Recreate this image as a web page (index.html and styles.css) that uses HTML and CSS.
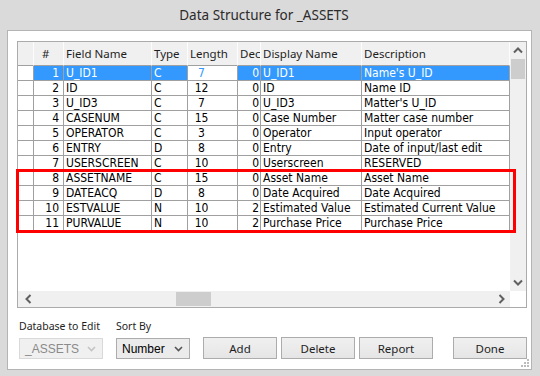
FILE: index.html
```html
<!DOCTYPE html>
<html lang="en">

<head>
    <meta charset="UTF-8">
    <title>Data Structure for _ASSETS</title>
    <link rel="stylesheet" href="styles.css">
</head>

<body>
    <div class="window">
        <div class="titlebar">Data Structure for _ASSETS</div>

        <div class="client">
            <div class="grid">
                <div class="grid-body">
                    <div class="row head">
                        <div class="cell"></div>
                        <div class="cell num">#</div>
                        <div class="cell">Field Name</div>
                        <div class="cell">Type</div>
                        <div class="cell">Length</div>
                        <div class="cell">Dec</div>
                        <div class="cell">Display Name</div>
                        <div class="cell">Description</div>
                    </div>
                    <div class="row selected">
                        <div class="cell ind"></div>
                        <div class="cell num">1</div>
                        <div class="cell">U_ID1</div>
                        <div class="cell">C</div>
                        <div class="cell len editing">7</div>
                        <div class="cell dec">0</div>
                        <div class="cell">U_ID1</div>
                        <div class="cell">Name's U_ID</div>
                    </div>
                    <div class="row">
                        <div class="cell ind"></div>
                        <div class="cell num">2</div>
                        <div class="cell">ID</div>
                        <div class="cell">C</div>
                        <div class="cell len">12</div>
                        <div class="cell dec">0</div>
                        <div class="cell">ID</div>
                        <div class="cell">Name ID</div>
                    </div>
                    <div class="row">
                        <div class="cell ind"></div>
                        <div class="cell num">3</div>
                        <div class="cell">U_ID3</div>
                        <div class="cell">C</div>
                        <div class="cell len">7</div>
                        <div class="cell dec">0</div>
                        <div class="cell">U_ID3</div>
                        <div class="cell">Matter's U_ID</div>
                    </div>
                    <div class="row">
                        <div class="cell ind"></div>
                        <div class="cell num">4</div>
                        <div class="cell">CASENUM</div>
                        <div class="cell">C</div>
                        <div class="cell len">15</div>
                        <div class="cell dec">0</div>
                        <div class="cell">Case Number</div>
                        <div class="cell">Matter case number</div>
                    </div>
                    <div class="row">
                        <div class="cell ind"></div>
                        <div class="cell num">5</div>
                        <div class="cell">OPERATOR</div>
                        <div class="cell">C</div>
                        <div class="cell len">3</div>
                        <div class="cell dec">0</div>
                        <div class="cell">Operator</div>
                        <div class="cell">Input operator</div>
                    </div>
                    <div class="row">
                        <div class="cell ind"></div>
                        <div class="cell num">6</div>
                        <div class="cell">ENTRY</div>
                        <div class="cell">D</div>
                        <div class="cell len">8</div>
                        <div class="cell dec">0</div>
                        <div class="cell">Entry</div>
                        <div class="cell">Date of input/last edit</div>
                    </div>
                    <div class="row">
                        <div class="cell ind"></div>
                        <div class="cell num">7</div>
                        <div class="cell">USERSCREEN</div>
                        <div class="cell">C</div>
                        <div class="cell len">10</div>
                        <div class="cell dec">0</div>
                        <div class="cell">Userscreen</div>
                        <div class="cell">RESERVED</div>
                    </div>
                    <div class="row">
                        <div class="cell ind"></div>
                        <div class="cell num">8</div>
                        <div class="cell">ASSETNAME</div>
                        <div class="cell">C</div>
                        <div class="cell len">15</div>
                        <div class="cell dec">0</div>
                        <div class="cell">Asset Name</div>
                        <div class="cell">Asset Name</div>
                    </div>
                    <div class="row">
                        <div class="cell ind"></div>
                        <div class="cell num">9</div>
                        <div class="cell">DATEACQ</div>
                        <div class="cell">D</div>
                        <div class="cell len">8</div>
                        <div class="cell dec">0</div>
                        <div class="cell">Date Acquired</div>
                        <div class="cell">Date Acquired</div>
                    </div>
                    <div class="row">
                        <div class="cell ind"></div>
                        <div class="cell num">10</div>
                        <div class="cell">ESTVALUE</div>
                        <div class="cell">N</div>
                        <div class="cell len">10</div>
                        <div class="cell dec">2</div>
                        <div class="cell">Estimated Value</div>
                        <div class="cell">Estimated Current Value</div>
                    </div>
                    <div class="row">
                        <div class="cell ind"></div>
                        <div class="cell num">11</div>
                        <div class="cell">PURVALUE</div>
                        <div class="cell">N</div>
                        <div class="cell len">10</div>
                        <div class="cell dec">2</div>
                        <div class="cell">Purchase Price</div>
                        <div class="cell">Purchase Price</div>
                    </div>
                </div>

                <!-- vertical scrollbar -->
                <div class="vscroll">
                    <svg class="arrow" width="16" height="17" viewBox="0 0 16 17">
                        <path d="M4 10.5 L8 6.5 L12 10.5" fill="none" stroke="#606060" stroke-width="2"/>
                    </svg>
                    <div class="vthumb"></div>
                    <div class="spacer"></div>
                    <svg class="arrow" width="16" height="17" viewBox="0 0 16 17">
                        <path d="M4 6.5 L8 10.5 L12 6.5" fill="none" stroke="#606060" stroke-width="2"/>
                    </svg>
                </div>

                <!-- horizontal scrollbar -->
                <div class="hscroll">
                    <svg class="arrow" width="17" height="16" viewBox="0 0 17 16">
                        <path d="M10.5 4 L6.5 8 L10.5 12" fill="none" stroke="#606060" stroke-width="2"/>
                    </svg>
                    <div class="htrack">
                        <div class="hthumb"></div>
                    </div>
                    <svg class="arrow" width="17" height="16" viewBox="0 0 17 16">
                        <path d="M6.5 4 L10.5 8 L6.5 12" fill="none" stroke="#606060" stroke-width="2"/>
                    </svg>
                </div>
                <div class="corner"></div>

                <div class="highlight"></div>
            </div>

            <div class="bottom">
                <div class="field">
                    <label>Database to Edit</label>
                    <div class="combo disabled">
                        <span>_ASSETS</span>
                        <svg width="9" height="6" viewBox="0 0 9 6">
                            <path d="M1 1 L4.5 4.5 L8 1" fill="none" stroke="#c4c4c4" stroke-width="1.6"/>
                        </svg>
                    </div>
                </div>
                <div class="field sort">
                    <label>Sort By</label>
                    <div class="combo">
                        <span>Number</span>
                        <svg width="9" height="6" viewBox="0 0 9 6">
                            <path d="M1 1 L4.5 4.5 L8 1" fill="none" stroke="#555" stroke-width="1.6"/>
                        </svg>
                    </div>
                </div>
                <div class="buttons">
                    <button class="btn">Add</button>
                    <button class="btn">Delete</button>
                    <button class="btn">Report</button>
                    <button class="btn done">Done</button>
                </div>
            </div>

            <svg class="grip" width="8" height="8" viewBox="0 0 8 8">
                <rect x="6" y="0" width="2" height="2" fill="#bcbcbc"/>
                <rect x="3" y="3" width="2" height="2" fill="#bcbcbc"/>
                <rect x="6" y="3" width="2" height="2" fill="#bcbcbc"/>
                <rect x="0" y="6" width="2" height="2" fill="#bcbcbc"/>
                <rect x="3" y="6" width="2" height="2" fill="#bcbcbc"/>
                <rect x="6" y="6" width="2" height="2" fill="#bcbcbc"/>
            </svg>
        </div>
    </div>
</body>

</html>
```

FILE: styles.css
```css
* {
    box-sizing: border-box;
    padding: 0;
    margin: 0;
}

body {
    width: 540px;
    height: 376px;
    overflow: hidden;
    font-family: 'DejaVu Sans Condensed', 'DejaVu Sans', sans-serif;
    font-size: 12px;
    color: #000;
}

/* Window frame */
.window {
    width: 540px;
    height: 376px;
    background: #dadada;
    display: flex;
    flex-direction: column;
}

.titlebar {
    height: 30px;
    line-height: 30px;
    text-align: center;
    padding-right: 12px;
    font-family: 'Noto Sans', sans-serif;
    font-size: 13.5px;
    color: #2b2b2b;
}

.client {
    position: relative;
    flex: 1;
    margin: 0 8px 6px 7px;
    border: 1px solid #b4b4b4;
    background: #fff;
    padding: 10px 4px 0 9px;
}

/* Data grid */
.grid {
    position: relative;
    height: 267px;
    border: 1px solid #ababab;
    display: grid;
    grid-template-columns: 492px 16px;
    grid-template-rows: 249px 16px;
}

.grid-body {
    overflow: hidden;
    background: #fff;
}

.row {
    display: grid;
    grid-template-columns: 16px 30px 88px 36px 50px 23px 101px 148px;
    height: 15px;
}

.cell {
    border-right: 1px solid #a0a0a0;
    border-bottom: 1px solid #a0a0a0;
    padding: 0 2px;
    line-height: 14px;
    white-space: nowrap;
    overflow: hidden;
}

.row.head {
    height: 24px;
    background: #f0f0f0;
    font-family: 'Noto Sans', sans-serif;
    font-size: 11.5px;
    color: #1e1e1e;
}

.row.head .cell {
    line-height: 23px;
    border-right: 1px solid #fcfcfc;
    border-bottom: 1px solid #a0a0a0;
}

.row.head .num {
    text-align: left;
    padding-left: 8px;
}

.num {
    text-align: right;
    padding-right: 4px;
}

.len {
    text-align: center;
    padding-right: 24px;
}

.dec {
    text-align: right;
    padding-right: 1px;
}

.selected .cell {
    background: #3399ff;
    color: #fff;
}

.selected .cell.ind {
    background: #fff;
}

.selected .cell.editing {
    background: #fff;
    color: #3399ff;
}

/* Scrollbars */
.vscroll {
    background: #f0f0f0;
    display: flex;
    flex-direction: column;
}

.vthumb {
    height: 20px;
    margin: 0 1px;
    background: #cdcdcd;
}

.spacer {
    flex: 1;
}

.arrow {
    display: block;
    flex-shrink: 0;
}

.hscroll {
    background: #f0f0f0;
    display: flex;
    align-items: center;
    padding-left: 2px;
}

.htrack {
    flex: 1;
    height: 100%;
    padding: 1px 0;
}

.hthumb {
    width: 35px;
    height: 100%;
    margin-left: 139px;
    background: #cdcdcd;
}

.corner {
    background: #fff;
}

.highlight {
    position: absolute;
    left: -2px;
    top: 127px;
    width: 500px;
    height: 64px;
    border: 3px solid #ff0000;
}

/* Bottom controls */
.bottom {
    display: flex;
    align-items: flex-end;
    margin-top: 11px;
    padding-left: 2px;
    font-family: 'Noto Sans', sans-serif;
    font-size: 11.5px;
}

.field {
    width: 84px;
    flex-shrink: 0;
}

.field label {
    display: block;
    height: 19px;
    line-height: 15px;
    white-space: nowrap;
    font-size: 10.5px;
    color: #1e1e1e;
}

.field.sort {
    width: 74px;
    margin-left: 13px;
}

.combo {
    width: 100%;
    height: 21px;
    display: flex;
    align-items: center;
    justify-content: space-between;
    padding: 0 6px 0 5px;
    border: 1px solid #d9d9d9;
    background: #f0f0f0;
    color: #8a8a8a;
    font-family: 'Liberation Sans', sans-serif;
    font-size: 12px;
}

.field.sort .combo {
    border-color: #acacac;
    background: #ebebeb;
    color: #000;
}

.buttons {
    display: flex;
    flex-shrink: 0;
    margin-left: 13px;
}

.btn {
    width: 74px;
    height: 22px;
    flex-shrink: 0;
    margin-right: 4px;
    border: 1px solid #acacac;
    background: linear-gradient(#f0f0f0, #e5e5e5);
    font-family: 'Noto Sans', sans-serif;
    font-size: 11.5px;
    color: #1e1e1e;
}

.btn.done {
    margin-left: 16px;
    margin-right: 0;
}

.grip {
    position: absolute;
    right: 2px;
    bottom: 2px;
}
```
